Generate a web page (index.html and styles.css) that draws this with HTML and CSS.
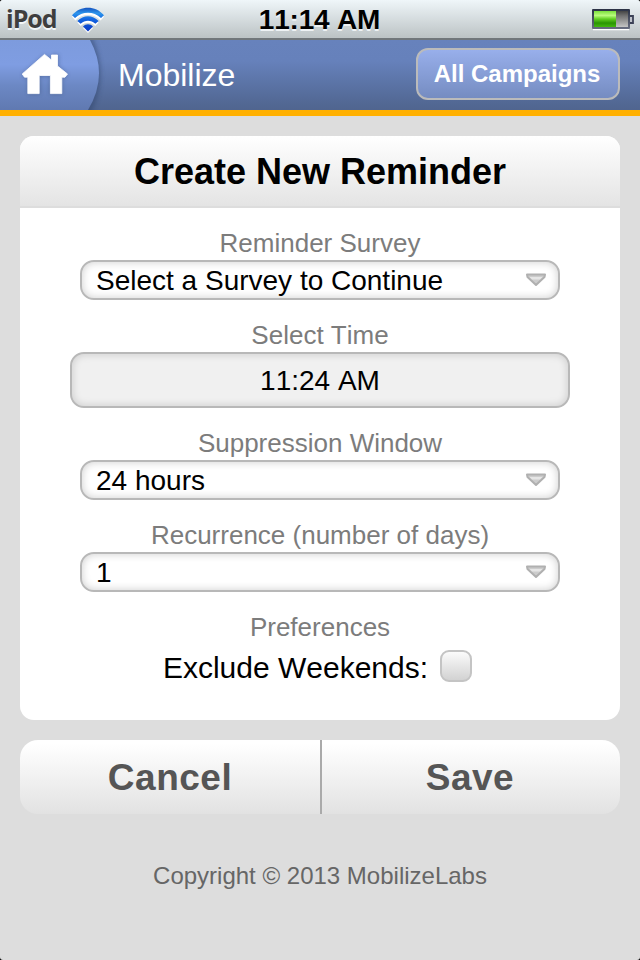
FILE: index.html
```
<!DOCTYPE html>
<html lang="en">
<head>
<meta charset="utf-8">
<title>Mobilize</title>
<link rel="stylesheet" href="styles.css">
</head>
<body>
<div class="screen">
  <div class="status">
    <div class="status-left">
      <span class="device">iPod</span>
      <svg class="wifi" width="34" height="26" viewBox="0 0 34 26">
        <defs><linearGradient id="wf" x1="0" y1="0" x2="0" y2="25" gradientUnits="userSpaceOnUse"><stop offset="0" stop-color="#1149b8"/><stop offset=".25" stop-color="#2d95ec"/><stop offset=".5" stop-color="#1264e0"/><stop offset="1" stop-color="#0634c4"/></linearGradient></defs>
        <g fill="#fff" transform="translate(0 1.6)">
          <path d="M1 8.2C10-1.6 24-1.6 33 8.2L29.6 11.8C22.6 4.6 11.4 4.6 4.4 11.8Z"/>
          <path d="M6.4 14C12.4 7.6 21.6 7.6 27.6 14L24.2 17.4C20 13.2 14 13.2 9.8 17.4Z"/>
          <path d="M12 19.4C14.8 16.6 19.2 16.6 22 19.4L17 24.4Z"/>
        </g>
        <g fill="url(#wf)">
          <path d="M1 8.2C10-1.6 24-1.6 33 8.2L30 11C22.6 4 11.400 4 4 11Z"/>
          <path d="M6.4 14C12.4 7.600 21.600 7.600 27.600 14L24.400 16.800C20 12.800 14 12.800 9.600 16.800Z"/>
          <path d="M12 19.4C14.8 16.6 19.2 16.6 22 19.4L17 24.4Z"/>
        </g>
      </svg>
    </div>
    <span class="clock">11:14 AM</span>
    <svg class="battery" width="42" height="22" viewBox="0 0 42 22">
      <defs>
        <linearGradient id="charge" x1="0" y1="0" x2="0" y2="1"><stop offset="0" stop-color="#7be03c"/><stop offset=".28" stop-color="#b9fb7d"/><stop offset=".5" stop-color="#62cf22"/><stop offset=".75" stop-color="#2a9404"/><stop offset="1" stop-color="#43b80f"/></linearGradient>
        <linearGradient id="empty" x1="0" y1="0" x2="0" y2="1"><stop offset="0" stop-color="#444"/><stop offset=".3" stop-color="#727272"/><stop offset="1" stop-color="#c4c4c4"/></linearGradient>
        <linearGradient id="shell" x1="0" y1="0" x2="0" y2="1"><stop offset="0" stop-color="#2a3145"/><stop offset="1" stop-color="#686d80"/></linearGradient>
      </defs>
      <path d="M1 20.5h36" stroke="#fff" stroke-width="1.4"/>
      <rect width="38" height="20" rx="1" fill="url(#shell)"/>
      <rect x="2" y="2" width="34" height="16" fill="url(#empty)"/>
      <rect x="2" y="2" width="22" height="16" fill="url(#charge)"/>
      <path d="M38 7h3v7h-3" fill="#bfc3cb" stroke="#3b4156" stroke-width="1.8"/>
    </svg>
  </div>

  <header class="header">
    <a class="home">
      <svg class="home-shape" width="108" height="70" viewBox="0 0 108 70">
        <defs>
          <linearGradient id="tab" x1="0" y1="0" x2="0" y2="1"><stop offset="0" stop-color="#7d9bdd"/><stop offset=".35" stop-color="#7f9de2"/><stop offset=".65" stop-color="#6c88c4"/><stop offset="1" stop-color="#6079b1"/></linearGradient>
          <filter id="soft" x="-20%" y="-20%" width="140%" height="140%"><feGaussianBlur stdDeviation="2"/></filter>
        </defs>
        <path d="M0-4H92Q110 35 91 74H0Z" fill="#33466f" opacity=".5" filter="url(#soft)"/>
        <path d="M0 0H90Q109 35 88 70H0Z" fill="url(#tab)"/>
        <path d="M45 14.5L51.500 20.500V14.500H58.500V26.500L67.500 34.500L65 38H62V54H50V36.500H40V54H28V38H24.500L22.500 34.500Z" fill="#33466f" opacity=".45" filter="url(#soft)"/>
        <path d="M44.500 14.400L51.500 20V15H57.500V26L67.500 34L65 37.200H61.800V53.600H50.400V35.500H39.200V53.600H27.800V37.200H24.500L22.200 34Z" fill="#fff" stroke="#fff" stroke-width=".8" stroke-linejoin="round"/>
      </svg>
    </a>
    <h1 class="brand">Mobilize</h1>
    <a class="campaigns">All Campaigns</a>
  </header>

  <main class="content">
    <section class="card">
      <h2 class="card-title">Create New Reminder</h2>
      <form class="form">
        <div class="field">
          <span class="label">Reminder Survey</span>
          <div class="select"><span>Select a Survey to Continue</span><svg class="arrow" width="22" height="14" viewBox="0 0 22 14"><path d="M2 1.500H20L19.500 4L11 12L2.500 4Z" fill="#ccc" stroke="#b0b0b0" stroke-width="2" stroke-linejoin="round"/><path d="M4.500 4H17.500L15 6.500H7Z" fill="#e6e6e6"/></svg></div>
        </div>
        <div class="field">
          <span class="label">Select Time</span>
          <div class="time">11:24 AM</div>
        </div>
        <div class="field">
          <span class="label">Suppression Window</span>
          <div class="select"><span>24 hours</span><svg class="arrow" width="22" height="14" viewBox="0 0 22 14"><path d="M2 1.500H20L19.500 4L11 12L2.500 4Z" fill="#ccc" stroke="#b0b0b0" stroke-width="2" stroke-linejoin="round"/><path d="M4.500 4H17.500L15 6.500H7Z" fill="#e6e6e6"/></svg></div>
        </div>
        <div class="field">
          <span class="label">Recurrence (number of days)</span>
          <div class="select"><span>1</span><svg class="arrow" width="22" height="14" viewBox="0 0 22 14"><path d="M2 1.500H20L19.500 4L11 12L2.500 4Z" fill="#ccc" stroke="#b0b0b0" stroke-width="2" stroke-linejoin="round"/><path d="M4.500 4H17.500L15 6.500H7Z" fill="#e6e6e6"/></svg></div>
        </div>
        <div class="field">
          <span class="label">Preferences</span>
          <div class="check-row"><span class="check-text">Exclude Weekends:</span><span class="checkbox"></span></div>
        </div>
      </form>
    </section>
    <div class="actions">
      <a class="action">Cancel</a>
      <a class="action action-save">Save</a>
    </div>
  </main>
  <footer class="footer">Copyright © 2013 MobilizeLabs</footer>
</div>
</body>
</html>
```
FILE: styles.css
```
* { box-sizing: border-box; }

body {
  margin: 0;
  background: #000;
  font-family: "Liberation Sans", Arial, sans-serif;
  font-kerning: none;
}

.screen {
  height: 960px;
  display: flex;
  flex-direction: column;
  background: #ddd;
  border-radius: 3px;
  overflow: hidden;
}

.status {
  height: 40px;
  padding: 0 6px 0 6px;
  display: grid;
  grid-template-columns: 1fr auto 1fr;
  background: linear-gradient(#eff6f9, #bdc4c6 37px);
  border-bottom: 2px solid #71777b;
}

.status-left { display: flex; }

.device {
  width: 66px;
  font: 700 25px/36px "Open Sans", "Noto Sans", sans-serif;
  letter-spacing: -1px;
  color: #3e3e3e;
  text-shadow: 0 2px 0 #f3f7f9;
}

.wifi { margin-top: 7px; margin-left: -1px; }

.clock {
  font-size: 28px;
  font-weight: bold;
  line-height: 40px;
  letter-spacing: -0.2px;
  margin-left: -1px;
  color: #000;
  text-shadow: 0 2px 0 #eef2f4;
}

.battery { justify-self: end; margin-top: 9px; }

.header {
  height: 76px;
  display: flex;
  align-items: center;
  padding-right: 20px;
  background: linear-gradient(#6782bc, #6681bb 30%, #526894 90%, #50658f);
  border-bottom: 6px solid #ffb000;
}

.home { width: 108px; height: 70px; }
.home-shape { display: block; }

.brand {
  flex: 1;
  margin: 0;
  padding-left: 10px;
  font-size: 32px;
  font-weight: normal;
  line-height: 70px;
  color: #fff;
}

.campaigns {
  width: 204px;
  height: 52px;
  margin-top: -2px;
  padding-right: 2px;
  border: 2px solid #bbb;
  border-radius: 12px;
  background: linear-gradient(#98afeb, #758cc1);
  color: #fff;
  font-size: 24px;
  font-weight: bold;
  line-height: 48px;
  text-align: center;
}

.content { padding: 20px 20px 0; }

.card {
  height: 584px;
  background: #fff;
  border-radius: 14px;
  overflow: hidden;
}

.card-title {
  height: 72px;
  margin: 0;
  border-bottom: 2px solid #ddd;
  background: linear-gradient(#fff, #e4e4e4);
  color: #000;
  font-size: 36px;
  line-height: 71px;
  text-align: center;
}

.form {
  display: flex;
  flex-direction: column;
  gap: 20px;
  padding-top: 20px;
}

.field {
  display: flex;
  flex-direction: column;
  align-items: center;
  gap: 2px;
}

.label {
  color: #7c7c7c;
  font-size: 26px;
  line-height: 30px;
}

.select,
.time {
  border: 2px solid #b8b8b8;
  border-radius: 14px;
  color: #000;
  font-size: 28px;
}

.select {
  width: 480px;
  height: 40px;
  padding: 0 11px 0 14px;
  display: flex;
  align-items: center;
  justify-content: space-between;
  background: #fff;
  box-shadow: inset 0 0 8px rgba(0, 0, 0, .2);
  line-height: 34px;
}

.select span { padding-top: 2px; }

.time {
  width: 500px;
  height: 56px;
  background: #f0f0f0;
  box-shadow: inset 0 0 8px rgba(0, 0, 0, .17);
  line-height: 53px;
  text-align: center;
}

.check-row {
  display: flex;
  align-items: center;
  gap: 12px;
  height: 32px;
  margin-top: 6px;
  margin-right: 5px;
  color: #000;
  font-size: 30px;
  line-height: 32px;
}

.check-text { padding-top: 3px; }

.checkbox {
  width: 32px;
  height: 32px;
  border: 2px solid #c4c4c4;
  border-radius: 9px;
  background: linear-gradient(#fbfbfb, #d2d2d2);
}

.actions {
  height: 74px;
  margin-top: 20px;
  display: grid;
  grid-template-columns: 300px 300px;
  border-radius: 18px;
  overflow: hidden;
  background: linear-gradient(#fff 5%, #e2e2e2);
}

.action {
  color: #555;
  font-size: 37px;
  font-weight: bold;
  line-height: 75px;
  letter-spacing: .5px;
  text-align: center;
}

.action-save {
  padding-right: 2px;
  border-left: 2px solid #aaa;
}

.footer {
  margin-top: 46px;
  color: #666;
  font-size: 24px;
  line-height: 32px;
  text-align: center;
}
```
